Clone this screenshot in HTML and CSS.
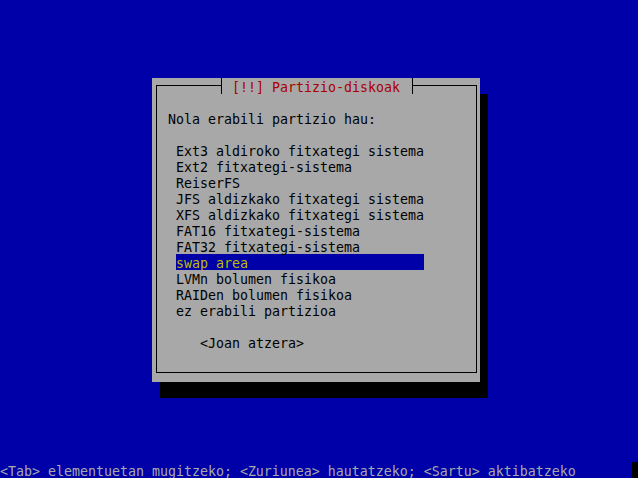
FILE: index.html
```html
<!DOCTYPE html>
<html lang="eu">
<head>
    <meta charset="UTF-8">
    <title>Partizio-diskoak</title>
    <link rel="stylesheet" href="styles.css">
</head>
<body>
    <div class="screen">
        <div class="dialog">
            <div class="frame">
                <div class="title">[!!] Partizio-diskoak</div>
                <p class="question">Nola erabili partizio hau:</p>
                <ul class="options">
                    <li>Ext3 aldiroko fitxategi sistema</li>
                    <li>Ext2 fitxategi-sistema</li>
                    <li>ReiserFS</li>
                    <li>JFS aldizkako fitxategi sistema</li>
                    <li>XFS aldizkako fitxategi sistema</li>
                    <li>FAT16 fitxategi-sistema</li>
                    <li>FAT32 fitxategi-sistema</li>
                    <li class="selected">swap area</li>
                    <li>LVMn bolumen fisikoa</li>
                    <li>RAIDen bolumen fisikoa</li>
                    <li>ez erabili partizioa</li>
                </ul>
                <div class="button">&lt;Joan atzera&gt;</div>
            </div>
        </div>
        <div class="status">
            <span>&lt;Tab&gt; elementuetan mugitzeko; &lt;Zuriunea&gt; hautatzeko; &lt;Sartu&gt; aktibatzeko</span>
            <span class="cursor"></span>
        </div>
    </div>
</body>
</html>
```

FILE: styles.css
```css
* {
    margin: 0;
    padding: 0;
}
html, body {
    overflow: hidden;
}
body {
    background: #0000a8;
    font-family: "DejaVu Sans Mono", "Liberation Mono", monospace;
    font-size: 13.29px;
    /* cells are 16px high, glyphs sit a bit lower than the default */
    line-height: 20px;
}
.screen {
    width: 640px;
    height: 480px;
    margin-top: -2px;
    padding-top: 80px;
    box-sizing: border-box;
    display: flex;
    flex-direction: column;
}
.dialog {
    margin-left: 152px;
    width: 328px;
    height: 304px;
    padding: 7px 3px 0 4px;
    box-sizing: border-box;
    background: #a8a8a8;
    box-shadow: 8px 16px 0 #000;
    color: #000;
}
.frame {
    height: 288px;
    border: 1px solid #000;
    padding-left: 11px;
    box-sizing: border-box;
}
.title {
    width: fit-content;
    height: 16px;
    margin: -8px 0 0 53px;
    padding: 0 12px 0 10px;
    border-left: 1px solid #000;
    border-right: 1px solid #000;
    background: #a8a8a8;
    color: #a80000;
    white-space: pre;
    overflow: hidden;
}
.question {
    height: 16px;
    margin-top: 16px;
}
.options {
    list-style: none;
    width: 248px;
    margin: 16px 0 0 8px;
}
.options li {
    height: 16px;
    white-space: pre;
}
.options li.selected {
    background: #0000a8;
    color: #bcbc00;
}
.button {
    height: 16px;
    margin: 16px 0 0 32px;
}
.status {
    margin-top: auto;
    height: 16px;
    display: flex;
    justify-content: space-between;
    color: #a8a8a8;
    white-space: pre;
}
.status .cursor {
    width: 8px;
    background: #000;
}
```
